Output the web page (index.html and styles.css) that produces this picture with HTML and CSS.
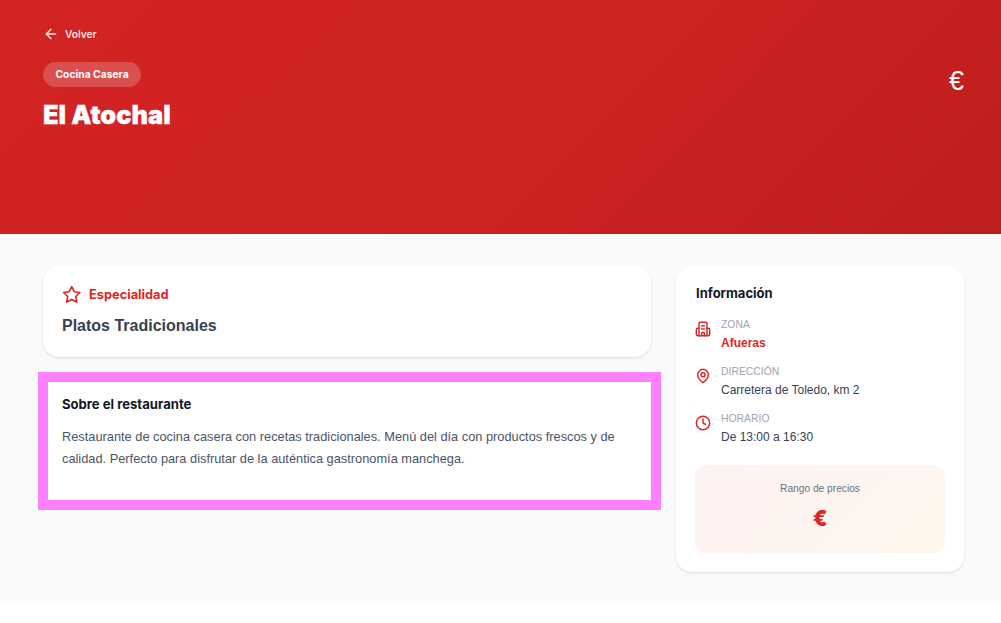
FILE: index.html
```html
<!DOCTYPE html>
<html lang="es">
<head>
<meta charset="utf-8">
<title>El Atochal</title>
<link rel="stylesheet" href="styles.css">
</head>
<body>
<header class="hero">
  <div class="hero-left">
    <a class="back" href="#">
      <svg class="back-icon" viewBox="0 0 24 24"><path d="M12 19l-7-7 7-7"/><path d="M19 12H5"/></svg>
      <span>Volver</span>
    </a>
    <span class="tag">Cocina Casera</span>
    <h1 class="title">El Atochal</h1>
  </div>
  <div class="hero-price">€</div>
</header>
<main class="content">
  <div class="col-main">
    <section class="card special">
      <div class="special-head">
        <svg class="star" viewBox="0 0 24 24"><path d="M12 2l3.09 6.26L22 9.27l-5 4.87 1.18 6.88L12 17.77l-6.18 3.25L7 14.14 2 9.27l6.91-1.01L12 2z"/></svg>
        <span class="special-label">Especialidad</span>
      </div>
      <p class="special-name">Platos Tradicionales</p>
    </section>
    <section class="about">
      <h2 class="about-title">Sobre el restaurante</h2>
      <p class="about-text">Restaurante de cocina casera con recetas tradicionales. Menú del día con productos frescos y de calidad. Perfecto para disfrutar de la auténtica gastronomía manchega.</p>
    </section>
  </div>
  <aside class="card info">
    <h2 class="info-title">Información</h2>
    <div class="info-row">
      <svg class="info-icon" viewBox="0 0 24 24"><path d="M6 22V4a2 2 0 0 1 2-2h8a2 2 0 0 1 2 2v18z"/><path d="M6 11H4a2 2 0 0 0-2 2v7a2 2 0 0 0 2 2h2"/><path d="M18 11h2a2 2 0 0 1 2 2v7a2 2 0 0 1-2 2h-2"/><path d="M10 7h4"/><path d="M10 12h4"/><path d="M10 22v-3a2 2 0 0 1 4 0v3"/></svg>
      <div><div class="info-label">ZONA</div><div class="info-value accent">Afueras</div></div>
    </div>
    <div class="info-row">
      <svg class="info-icon" viewBox="0 0 24 24"><path d="M20 10c0 6-8 12-8 12s-8-6-8-12a8 8 0 0 1 16 0z"/><circle cx="12" cy="10" r="3"/></svg>
      <div><div class="info-label">DIRECCIÓN</div><div class="info-value">Carretera de Toledo, km 2</div></div>
    </div>
    <div class="info-row">
      <svg class="info-icon" viewBox="0 0 24 24"><circle cx="12" cy="12" r="10"/><path d="M12 6v6l4 2"/></svg>
      <div><div class="info-label">HORARIO</div><div class="info-value">De 13:00 a 16:30</div></div>
    </div>
    <div class="price-box">
      <div class="price-label">Rango de precios</div>
      <div class="price-value">€</div>
    </div>
  </aside>
</main>
</body>
</html>
```
FILE: styles.css
```css
* { box-sizing: border-box; }
html, body { margin: 0; padding: 0; background: #fff; }
body { font-family: "Liberation Sans", Arial, sans-serif; color: #374151; }
h1, h2, p { margin: 0; }

.hero {
  height: 234px;
  padding: 26px 37px 0 43px;
  display: flex;
  justify-content: space-between;
  background: linear-gradient(135deg, #d32323 0%, #cf2323 50%, #bd1d1d 100%);
  color: #fff;
}
.hero-left { display: flex; flex-direction: column; align-items: flex-start; }
.back {
  display: flex;
  align-items: center;
  gap: 6px;
  height: 16px;
  color: rgba(255,255,255,.9);
  font: 600 10.2px/17px Inter, sans-serif;
  text-decoration: none;
}
.back-icon { width: 16px; height: 16px; fill: none; stroke: currentColor; stroke-width: 2; stroke-linecap: round; stroke-linejoin: round; }
.tag {
  margin-top: 20px;
  height: 25px;
  padding: 0 12.5px;
  border-radius: 13px;
  background: rgba(255,255,255,.2);
  font: 700 10.3px/25px Inter, sans-serif;
}
.title { margin-top: 12px; font: 900 25.4px/32px Inter, sans-serif; color: #fff; -webkit-text-stroke: .3px #fff; }
.hero-price { margin-top: 37px; font: 400 27px/36px "Liberation Sans", sans-serif; }

.content {
  display: flex;
  gap: 25px;
  align-items: flex-start;
  padding: 32px 37px 31px 43px;
  background: #f9fafb;
}
.col-main { width: 608px; flex: none; }
.card {
  background: #fff;
  border-radius: 16px;
  box-shadow: 0 1px 3px rgba(0,0,0,.1), 0 1px 2px -1px rgba(0,0,0,.1);
}
.special { height: 91px; padding: 19px; }
.special-head { display: flex; align-items: center; gap: 7.5px; height: 20px; }
.star { width: 19.5px; height: 19.5px; margin-top: -1px; fill: none; stroke: #dc2626; stroke-width: 2; stroke-linejoin: round; stroke-linecap: round; }
.special-label { font: 700 12.8px/20px Inter, sans-serif; color: #dc2626; }
.special-name { margin-top: 9px; font: 700 16px/24px "Liberation Sans", sans-serif; color: #374151; }

.about {
  margin: 15px -10px 0 -5px;
  height: 138px;
  padding: 13px 14px 0 14px;
  border: 10px solid #ff80ff;
  background: #fff;
}
.about-title { font: 700 13.1px/18px Inter, sans-serif; color: #111827; }
.about-text { margin-top: 13px; font: 400 12.8px/22.4px "Liberation Sans", sans-serif; color: #4b5563; }

.info { width: 288px; flex: none; height: 306px; padding: 18px 19px 19px; }
.info-title { margin-left: 1px; font: 700 13px/18px Inter, sans-serif; color: #111827; }
.info-row { display: flex; gap: 10px; margin-top: 13px; }
.info-title + .info-row { margin-top: 16px; }
.info-icon { width: 16px; height: 16px; margin-top: 3px; flex: none; fill: none; stroke: #dc2626; stroke-width: 2.2; stroke-linecap: round; stroke-linejoin: round; }
.info-label { font: 400 10.4px/14px "Liberation Sans", sans-serif; color: #9ca3af; }
.info-value { margin-top: 2px; font: 400 12px/18px "Liberation Sans", sans-serif; color: #374151; }
.info-value.accent { color: #dc2626; font-weight: 700; }

.price-box {
  margin-top: 19px;
  height: 88px;
  padding-top: 16px;
  border-radius: 12px;
  background: linear-gradient(135deg, #fef2f2, #fff7ed);
  text-align: center;
}
.price-label { font: 400 10.2px/16px "Liberation Sans", sans-serif; color: #6b7280; }
.price-value { margin-top: 8px; font: 900 21px/28px Inter, sans-serif; color: #dc2626; }
```
